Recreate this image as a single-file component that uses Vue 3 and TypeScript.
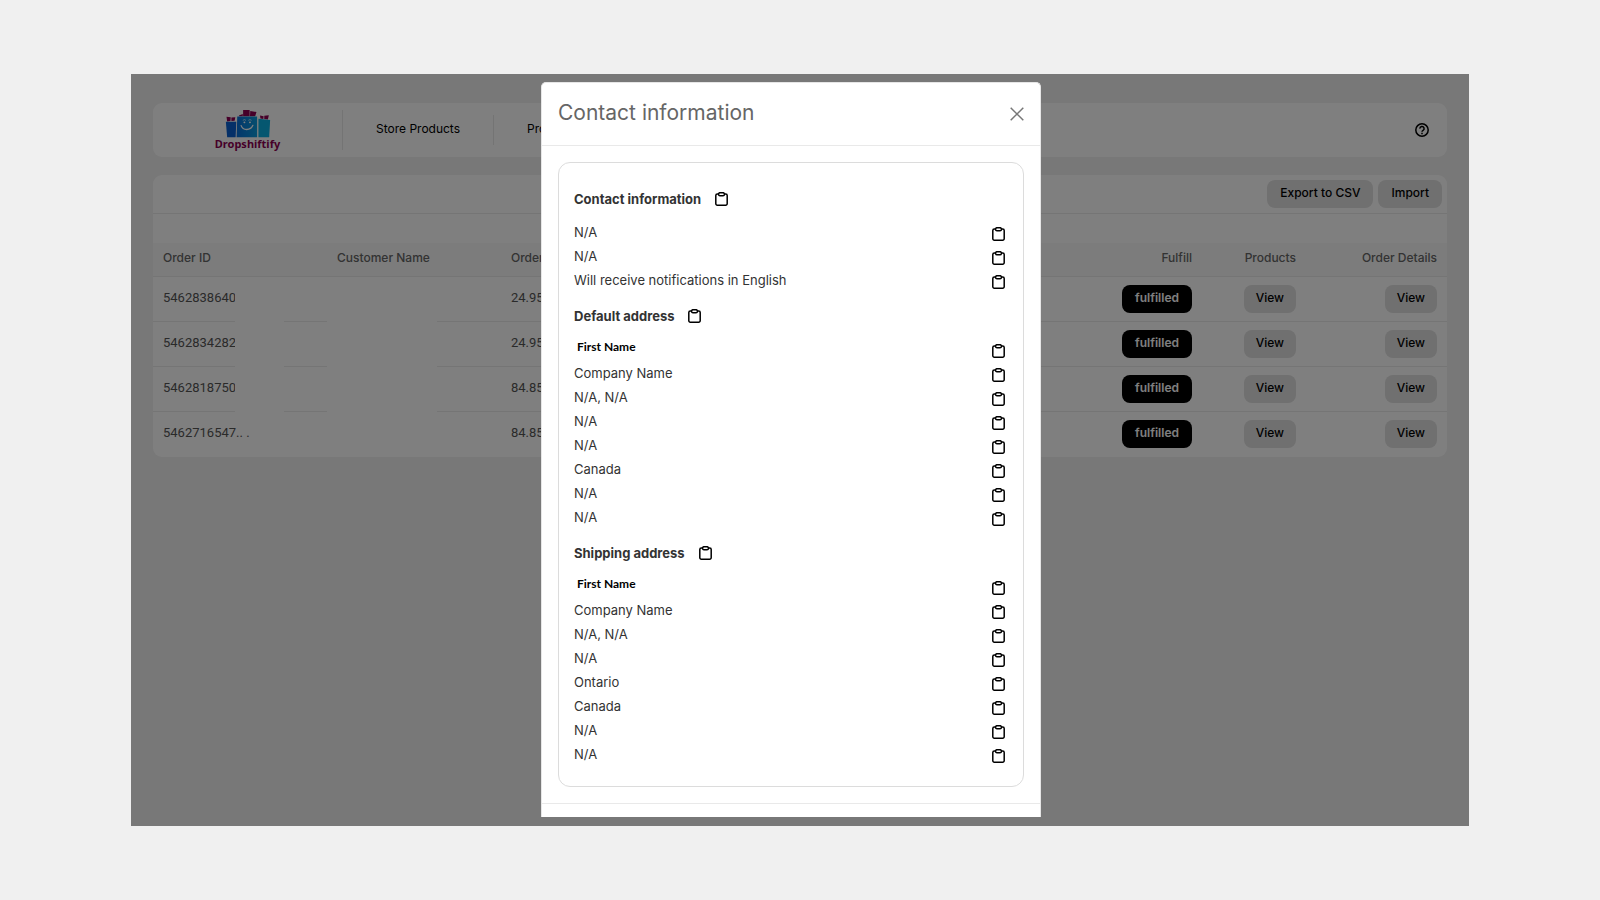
<script setup lang="ts">
interface Order {
  id: string
  total: string
  masked: boolean
}

interface Line {
  text: string
  isName?: boolean
}

interface Section {
  title: string
  lines: Line[]
}

const orders: Order[] = [
  { id: '5462838640', total: '24.95', masked: true },
  { id: '5462834282', total: '24.95', masked: true },
  { id: '5462818750', total: '84.85', masked: true },
  { id: '5462716547.. .', total: '84.85', masked: false },
]

const plain = (...texts: string[]): Line[] => texts.map((text) => ({ text }))

const sections: Section[] = [
  {
    title: 'Contact information',
    lines: plain('N/A', 'N/A', 'Will receive notifications in English'),
  },
  {
    title: 'Default address',
    lines: [
      { text: 'First Name', isName: true },
      ...plain('Company Name', 'N/A, N/A', 'N/A', 'N/A', 'Canada', 'N/A', 'N/A'),
    ],
  },
  {
    title: 'Shipping address',
    lines: [
      { text: 'First Name', isName: true },
      ...plain('Company Name', 'N/A, N/A', 'N/A', 'Ontario', 'Canada', 'N/A', 'N/A'),
    ],
  },
]
</script>

<template>
  <div class="page">
    <div class="app">
      <header class="topbar">
        <a class="logo" href="#">
          <svg class="logo-art" viewBox="0 0 138 86" aria-hidden="true">
            <defs>
              <linearGradient id="bag" x1="0" y1="0" x2="1" y2="0">
                <stop offset="0" stop-color="#0a6fd8" />
                <stop offset="1" stop-color="#0a9cdc" />
              </linearGradient>
            </defs>
            <path d="M3 21l13 1-1 12-10 1z M18 23l12-1-2 11-10 1z" fill="#8c0052" />
            <path d="M54 0h20v19H54z M76 3l19 3-4 13H75z M41 17l12-5v7H42z" fill="#8c0052" />
            <path d="M106 17l11 2-1 9-9-2z M119 18l14-2-3 13-11-1z" fill="#8c0052" />
            <path d="M1 36h32l-2 48H5z" fill="#0a60d0" />
            <path d="M36 20h61v64H34z" fill="url(#bag)" />
            <path d="M101 27l36 4-3 53h-33z" fill="#0aaee0" />
            <g fill="none" stroke="#fff" stroke-linecap="round">
              <path d="M48 48c5 15 28 17 36-1" stroke-width="4" />
              <path d="M54 31q4-4 8 0 M71 31q4-4 8 0" stroke-width="2" />
            </g>
            <circle cx="58" cy="38" r="3" fill="#fff" />
            <circle cx="75" cy="38" r="3" fill="#fff" />
          </svg>
          <span class="logo-name">Dropshiftify</span>
        </a>
        <nav class="nav">
          <a class="nav-link" href="#">Store Products</a>
          <a class="nav-link" href="#">Products</a>
        </nav>
        <button class="help" type="button" aria-label="Help">
          <svg viewBox="0 0 14 14" width="14" height="14" fill="none" stroke="#000" stroke-width="1.5" aria-hidden="true">
            <circle cx="7" cy="7" r="6.2" />
            <path d="M4.9 5.6a2.1 2.1 0 1 1 3.2 1.7c-.8.5-1.1.8-1.1 1.5" />
            <path d="M7 9.7v1.5" />
          </svg>
        </button>
      </header>

      <main class="panel">
        <div class="toolbar">
          <button class="btn wide" type="button">Export to CSV</button>
          <button class="btn wide" type="button">Import</button>
        </div>
        <table class="orders">
          <colgroup>
            <col class="col-wide" />
            <col class="col-wide" />
            <col />
            <col class="col-wide" />
            <col class="col-products" />
            <col class="col-details" />
          </colgroup>
          <thead>
            <tr>
              <th scope="col">Order ID</th>
              <th scope="col">Customer Name</th>
              <th scope="col">Order</th>
              <th scope="col" class="end">Fulfill</th>
              <th scope="col" class="end">Products</th>
              <th scope="col" class="end">Order Details</th>
            </tr>
          </thead>
          <tbody>
            <tr v-for="order in orders" :key="order.id" :class="{ masked: order.masked }">
              <td class="id-cell">{{ order.id }}</td>
              <td class="name-cell"></td>
              <td>{{ order.total }}</td>
              <td class="end"><button class="btn wide dark" type="button">fulfilled</button></td>
              <td class="end"><button class="btn" type="button">View</button></td>
              <td class="end"><button class="btn" type="button">View</button></td>
            </tr>
          </tbody>
        </table>
      </main>

      <div class="overlay">
        <section class="modal" role="dialog" aria-modal="true" aria-labelledby="modal-title">
          <header class="modal-head">
            <h1 id="modal-title">Contact information</h1>
            <button class="close" type="button" aria-label="Close">
              <svg viewBox="0 0 14 14" width="14" height="14" stroke="#777" stroke-width="1.5" aria-hidden="true">
                <path d="M.7.7l12.6 12.6M13.3.7L.7 13.3" />
              </svg>
            </button>
          </header>
          <div class="modal-body">
            <div class="card">
              <section v-for="section in sections" :key="section.title" class="group">
                <div class="group-head">
                  <h2>{{ section.title }}</h2>
                  <button class="copy" type="button" :aria-label="'Copy ' + section.title">
                    <svg viewBox="0 0 13 14" width="13" height="14" fill="none" stroke="#000" stroke-width="1.5" aria-hidden="true">
                      <path d="M3.5 2H2.3A1.5 1.5 0 0 0 .8 3.5v8.2a1.5 1.5 0 0 0 1.5 1.5h8.4a1.5 1.5 0 0 0 1.5-1.5V3.5A1.5 1.5 0 0 0 10.7 2H9.5" />
                      <rect x="3.6" y=".7" width="5.8" height="3.1" rx="1.4" />
                    </svg>
                  </button>
                </div>
                <ul class="lines">
                  <li v-for="(line, i) in section.lines" :key="i">
                    <span :class="line.isName ? 'person' : 'value'">{{ line.text }}</span>
                    <button class="copy" type="button" aria-label="Copy line">
                      <svg viewBox="0 0 13 14" width="13" height="14" fill="none" stroke="#000" stroke-width="1.5" aria-hidden="true">
                        <path d="M3.5 2H2.3A1.5 1.5 0 0 0 .8 3.5v8.2a1.5 1.5 0 0 0 1.5 1.5h8.4a1.5 1.5 0 0 0 1.5-1.5V3.5A1.5 1.5 0 0 0 10.7 2H9.5" />
                        <rect x="3.6" y=".7" width="5.8" height="3.1" rx="1.4" />
                      </svg>
                    </button>
                  </li>
                </ul>
              </section>
            </div>
          </div>
          <footer class="modal-foot"></footer>
        </section>
      </div>
    </div>
  </div>
</template>

<style>
body {
  margin: 0;
  background: #f0f0f0;
}
</style>

<style scoped>
.page {
  box-sizing: border-box;
  display: flex;
  min-height: 100vh;
  padding: 74px 131px;
  background: #f0f0f0;
  color: #333;
  font: 13px/20px Inter, "Open Sans", sans-serif;
}

button {
  padding: 0;
  border: 0;
  background: none;
  color: inherit;
  font: inherit;
  cursor: pointer;
}

a {
  color: inherit;
  text-decoration: none;
}

svg {
  display: block;
}

.app {
  position: relative;
  box-sizing: border-box;
  flex: 1;
  min-width: 0;
  padding: 29px 22px;
}

.topbar {
  display: flex;
  align-items: center;
  height: 54px;
  margin-bottom: 18px;
  border-radius: 9px;
  background: #fff;
  color: #000;
}

.logo {
  display: flex;
  flex-direction: column;
  align-items: center;
  box-sizing: border-box;
  width: 190px;
  height: 40px;
  border-right: 1px solid #e8e8e8;
}

.logo-art {
  width: 46px;
  height: 28px;
}

.logo-name {
  color: #8c0052;
  font: 700 11px/12px "Noto Sans", "Open Sans", sans-serif;
}

.nav {
  display: flex;
  flex: 1;
  height: 30px;
  font-size: 12px;
}

.nav-link {
  box-sizing: border-box;
  padding: 0 33px;
  line-height: 28px;
}

.nav-link:first-child {
  border-right: 1px solid #e8e8e8;
}

.help {
  margin-right: 18px;
}

.panel {
  border-radius: 9px;
  background: #fff;
}

.toolbar {
  display: flex;
  align-items: center;
  justify-content: flex-end;
  gap: 5px;
  height: 38px;
  padding: 0 5px;
  border-bottom: 1px solid #ebebeb;
}

.btn {
  height: 28px;
  padding: 0 12px 2px;
  border-radius: 8px;
  background: #e0e0e0;
  color: #000;
  font-size: 12px;
  font-weight: 500;
}

.btn.wide {
  padding: 0 13px 2px;
}

.btn.dark {
  background: #000;
  color: #fff;
  font-weight: 600;
}

.orders {
  width: 100%;
  padding-top: 29px;
  border-spacing: 0;
  table-layout: fixed;
  color: #555;
}

.col-wide {
  width: 174px;
}

.col-products {
  width: 104px;
}

.col-details {
  width: 141px;
}

.orders th,
.orders td {
  box-sizing: border-box;
  padding: 0 10px;
  border-bottom: 1px solid #ebebeb;
  text-align: left;
}

.orders th {
  height: 34px;
  padding-bottom: 4px;
  background: #f8f8f8;
  color: #666;
  font-size: 12px;
  font-weight: 500;
}

.orders td {
  height: 45px;
  padding-bottom: 2px;
  font-family: Roboto, "Open Sans", sans-serif;
}

.orders .end {
  text-align: right;
}

.orders td.end {
  padding-bottom: 0;
  padding-left: 0;
}

.orders tr:last-child td {
  border-bottom-color: transparent;
}

.orders .btn {
  display: inline-block;
  vertical-align: middle;
  font-family: Inter, "Open Sans", sans-serif;
}

.masked .id-cell,
.masked .name-cell {
  position: relative;
}

.masked .id-cell::after,
.masked .name-cell::after {
  position: absolute;
  top: 0;
  bottom: -1px;
  background: #fff;
  content: "";
}

.masked .id-cell::after {
  left: 82px;
  width: 49px;
}

.masked .name-cell::after {
  left: 0;
  width: 110px;
}

.overlay {
  position: absolute;
  inset: 0;
  display: flex;
  align-items: flex-start;
  justify-content: center;
  padding: 8px 18px 0 0;
  background: rgba(0, 0, 0, 0.5);
}

.modal {
  box-sizing: border-box;
  width: 500px;
  border: 1px solid #e6e6e6;
  border-bottom: 0;
  border-radius: 5px 5px 0 0;
  background: #fff;
}

.modal-head {
  display: flex;
  align-items: center;
  justify-content: space-between;
  padding: 16px;
  border-bottom: 1px solid #e9e9e9;
}

.modal-head h1 {
  margin: 0;
  padding-bottom: 2px;
  color: #666;
  font-size: 21px;
  font-weight: 400;
  line-height: 28px;
}

.modal-body {
  padding: 16px;
}

.card {
  padding: 24px 15px 18px;
  border: 1px solid #dcdcdc;
  border-radius: 12px;
}

.group + .group {
  margin-top: 10px;
}

.group-head {
  display: flex;
  align-items: center;
  gap: 14px;
  height: 24px;
  margin-bottom: 11px;
}

.group-head h2 {
  margin: 0;
  font-size: 13px;
  font-weight: 700;
  line-height: 24px;
}

.lines {
  margin: 0;
  padding: 0;
  list-style: none;
}

.lines li {
  display: flex;
  align-items: flex-start;
  justify-content: space-between;
  height: 24px;
  padding-right: 3px;
}

.copy {
  display: flex;
  align-items: center;
  height: 24px;
}

.person {
  padding-left: 3px;
  color: #000;
  font: 700 12px/16px Lato, "Open Sans", sans-serif;
}

.modal-foot {
  height: 13px;
  border-top: 1px solid #e9e9e9;
}
</style>
